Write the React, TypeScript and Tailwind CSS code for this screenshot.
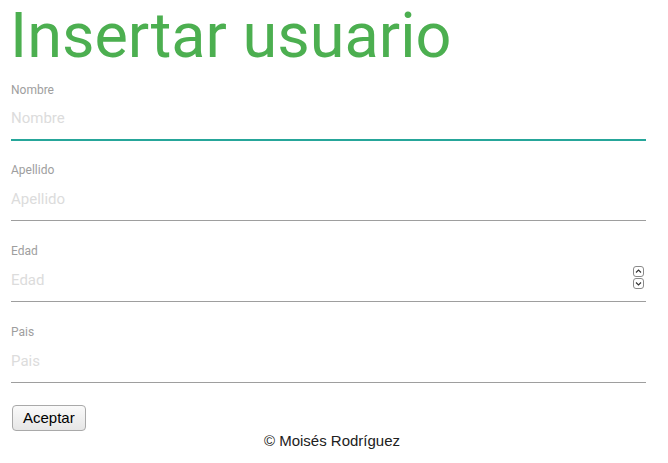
import React from "react";

const fields = [
  { label: "Nombre", focused: true },
  { label: "Apellido" },
  { label: "Edad", spinner: true },
  { label: "Pais" },
];

function Spinner() {
  return (
    <div className="absolute right-[2px] top-[8px] flex flex-col gap-[1px]">
      <svg width="11" height="11" viewBox="0 0 11 11">
        <rect x="0.5" y="0.5" width="10" height="10" rx="2.5" fill="white" stroke="#8a8a8a" />
        <path d="M3 6.5 L5.5 4 L8 6.5" fill="none" stroke="#333" strokeWidth="1.1" />
      </svg>
      <svg width="11" height="11" viewBox="0 0 11 11">
        <rect x="0.5" y="0.5" width="10" height="10" rx="2.5" fill="white" stroke="#8a8a8a" />
        <path d="M3 4.5 L5.5 7 L8 4.5" fill="none" stroke="#333" strokeWidth="1.1" />
      </svg>
    </div>
  );
}

export default function App() {
  return (
    <div className="w-[668px] h-[463px] bg-white font-['Roboto',sans-serif] overflow-hidden">
      <div className="px-[11px] w-[657px]">
        <h1 className="text-[63px] leading-[72px] text-[#4caf50] ml-[-1px]">Insertar usuario</h1>

        <form className="mt-[11px]">
          {fields.map((f, i) => (
            <div key={f.label} className={i === 0 ? "mb-[22px]" : "mb-[23px]"}>
              <label className="block text-[12px] leading-[14px] text-[#9e9e9e]">{f.label}</label>
              <div className="relative">
                <input
                  type="text"
                  placeholder={f.label}
                  className={
                    "block w-full h-[44px] text-[15px] bg-transparent outline-none placeholder:text-[#dcdcdc] " +
                    (f.focused
                      ? "border-b-2 border-[#26a69a]"
                      : "border-b border-[#9e9e9e]")
                  }
                />
                {f.spinner && <Spinner />}
              </div>
            </div>
          ))}
        </form>
      </div>

      <div className="px-[12px] mt-[-1px]">
        <button className="h-[26px] px-[10px] text-[15px] font-['Liberation_Sans',sans-serif] text-black rounded-[4px] border border-[#a9a9a9] bg-gradient-to-b from-[#fafafa] to-[#e6e6e6]">
          Aceptar
        </button>
      </div>
      <p className="text-center text-[15px] leading-[18px] text-[#212121] font-['Liberation_Sans',sans-serif] mt-[1px] ml-[-4px]">
        © Moisés Rodríguez
      </p>
    </div>
  );
}
